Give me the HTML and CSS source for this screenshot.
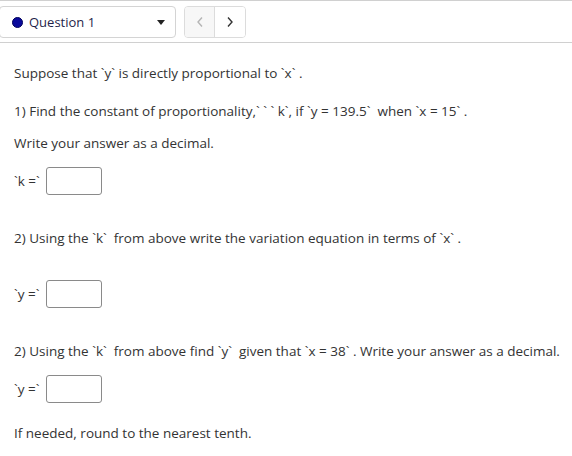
FILE: index.html
```html
<!DOCTYPE html>
<html>
<head>
<meta charset="utf-8">
<link rel="stylesheet" href="styles.css">
</head>
<body>
<div class="header">
  <div class="select">
    <span class="dot"></span>
    <span class="select-label">Question 1</span>
    <span class="caret"></span>
  </div>
  <div class="nav">
    <button class="nav-btn disabled">
      <svg width="8" height="12" viewBox="0 0 8 12"><path d="M6 1.5 L2 6 L6 10.5" fill="none" stroke="#b5b5b5" stroke-width="1.4"/></svg>
    </button>
    <button class="nav-btn">
      <svg width="8" height="12" viewBox="0 0 8 12"><path d="M2 1.5 L6 6 L2 10.5" fill="none" stroke="#333" stroke-width="1.4"/></svg>
    </button>
  </div>
</div>
<div class="content">
  <p class="intro">Suppose that `y` is directly proportional to `x` .</p>
  <p class="q1">1) Find the constant of proportionality,` ` ` k`, if `y = 139.5` &nbsp;when `x = 15` .</p>
  <p class="note">Write your answer as a decimal.</p>
  <div class="answer a1"><span class="lbl">`k =`</span><span class="box"></span></div>
  <p class="q2">2) Using the `k` &nbsp;from above write the variation equation in terms of `x` .</p>
  <div class="answer a2"><span class="lbl">`y =`</span><span class="box"></span></div>
  <p class="q3">2) Using the `k` &nbsp;from above find `y` &nbsp;given that `x = 38` . Write your answer as a decimal.</p>
  <div class="answer a3"><span class="lbl">`y =`</span><span class="box"></span></div>
  <p class="hint">If needed, round to the nearest tenth.</p>
</div>
</body>
</html>
```

FILE: styles.css
```css
* { box-sizing: border-box; }
html, body { margin: 0; padding: 0; background: #fff; }
body {
  font-family: "Open Sans", "Noto Sans", sans-serif;
  font-size: 13.5px;
  color: #333;
  width: 572px;
  height: 456px;
  overflow: hidden;
}
.header {
  height: 43px;
  border-top: 1px solid #d0d0d0;
  border-bottom: 1px solid #d0d0d0;
  display: flex;
  align-items: center;
  gap: 8px;
  padding-top: 1px;
  font-size: 13px;
}
.select {
  width: 177px;
  height: 32px;
  margin-left: -1px;
  border: 1px solid #d4d4d4;
  border-radius: 4px;
  display: flex;
  align-items: center;
  padding-left: 12px;
  padding-right: 10px;
}
.dot {
  width: 11px;
  height: 11px;
  border-radius: 50%;
  background: #0a0a9c;
  border: 1px solid #00005a;
  flex: none;
}
.select-label {
  margin-left: 6px;
  color: #1f1f4a;
  flex: 1;
}
.caret {
  width: 0; height: 0;
  border-left: 4px solid transparent;
  border-right: 4px solid transparent;
  border-top: 5px solid #222;
}
.nav {
  display: flex;
  height: 32px;
  border: 1px solid #dcdcdc;
  border-radius: 4px;
  overflow: hidden;
}
.nav-btn {
  width: 30px;
  height: 30px;
  border: 0;
  padding: 0;
  background: #fff;
  display: flex;
  align-items: center;
  justify-content: center;
}
.nav-btn.disabled {
  background: #f7f7f7;
  border-right: 1px solid #dcdcdc;
}
.content {
  padding-left: 14px;
}
p { margin: 0; line-height: 18px; }
.intro { margin-top: 21px; }
.q1 { margin-top: 20px; }
.note { margin-top: 14px; }
.answer {
  display: flex;
  align-items: center;
  gap: 5px;
}
.a1 { margin-top: 15px; }
.q2 { margin-top: 34px; }
.a2 { margin-top: 33px; }
.q3 { margin-top: 34px; }
.a3 { margin-top: 15px; }
.hint { margin-top: 21px; }
.lbl { width: 27px; }
.box {
  width: 56px;
  height: 28px;
  border: 1px solid #8a8a8a;
  border-radius: 3px;
  background: #fff;
}
```
